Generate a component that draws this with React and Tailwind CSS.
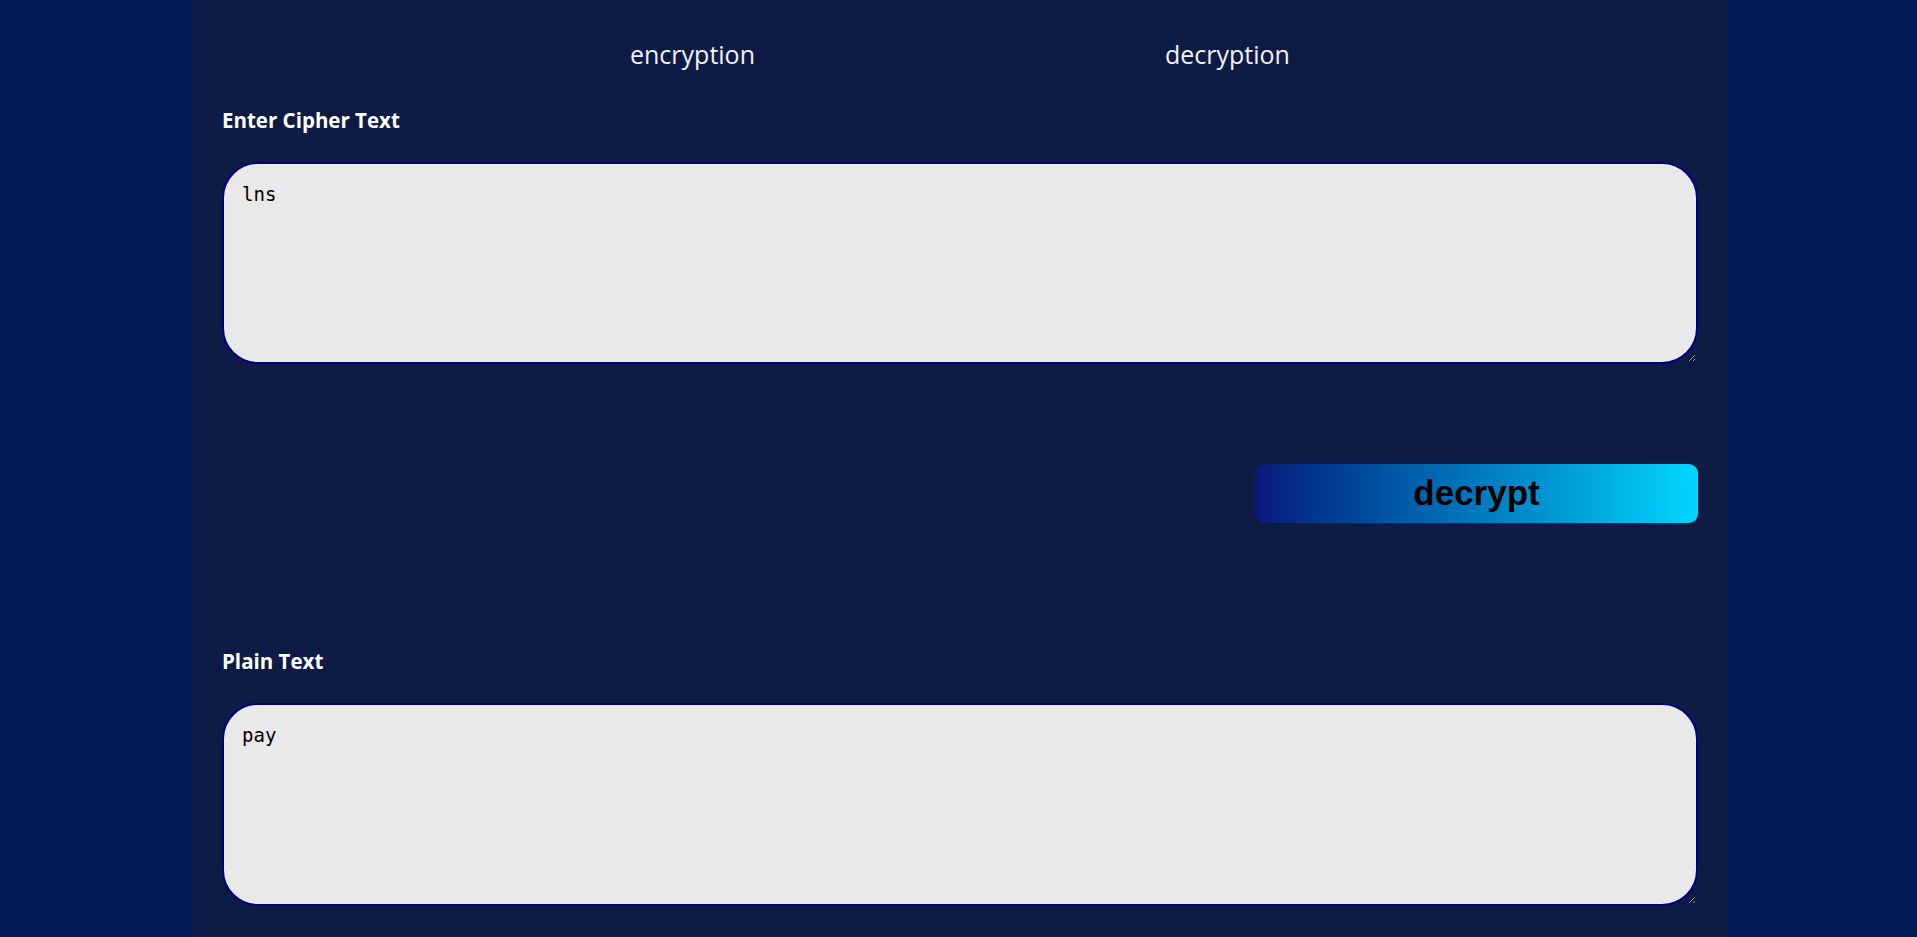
import { useState } from "react";

export default function App() {
  const [cipher, setCipher] = useState("lns");
  const [plain, setPlain] = useState("pay");
  const [mode, setMode] = useState("decryption");

  const sans = { fontFamily: '"Open Sans", "Noto Sans", sans-serif' };
  const mono = { fontFamily: '"DejaVu Sans Mono", monospace' };

  return (
    <div className="min-h-screen w-full bg-[#001957]">
      <div
        className="ml-[192px] w-[1536px] min-h-[937px] bg-[#0e1b45] px-[30px] pt-[38px] pb-[40px]"
        style={sans}
      >
        {/* TABS */}
        <div className="flex justify-center">
          <button
            onClick={() => setMode("encryption")}
            className="w-[535px] text-center text-[25px] leading-[33px] text-[#f2f2f2]"
          >
            encryption
          </button>
          <button
            onClick={() => setMode("decryption")}
            className="w-[535px] text-center text-[25px] leading-[33px] text-[#f2f2f2]"
          >
            decryption
          </button>
        </div>

        {/* CIPHER INPUT */}
        <h2 className="mt-[35px] text-[20.5px] leading-[28px] font-bold text-white">
          Enter Cipher Text
        </h2>
        <textarea
          value={cipher}
          onChange={(e) => setCipher(e.target.value)}
          className="mt-[28px] block h-[202px] w-full rounded-[36px] border-2 border-[#000080] bg-[#e9e9e9] pt-[16px] pl-[18px] pr-[18px] text-[19px] text-black outline-none"
          style={mono}
        />

        {/* ACTION */}
        <div className="mt-[100px] flex justify-end">
          <button
            className="h-[59px] w-[443px] rounded-[9px] bg-gradient-to-r from-[#0a1a7c] to-[#00d6ff] text-[35px] font-bold text-black"
            style={{ fontFamily: '"Liberation Sans", Arial, sans-serif' }}
          >
            {mode === "decryption" ? "decrypt" : "encrypt"}
          </button>
        </div>

        {/* RESULT */}
        <h2 className="mt-[124px] text-[20.5px] leading-[28px] font-bold text-white">
          Plain Text
        </h2>
        <textarea
          value={plain}
          onChange={(e) => setPlain(e.target.value)}
          className="mt-[28px] block h-[203px] w-full rounded-[36px] border-2 border-[#000080] bg-[#e9e9e9] pt-[16px] pl-[18px] pr-[18px] text-[19px] text-black outline-none"
          style={mono}
        />
      </div>
    </div>
  );
}
